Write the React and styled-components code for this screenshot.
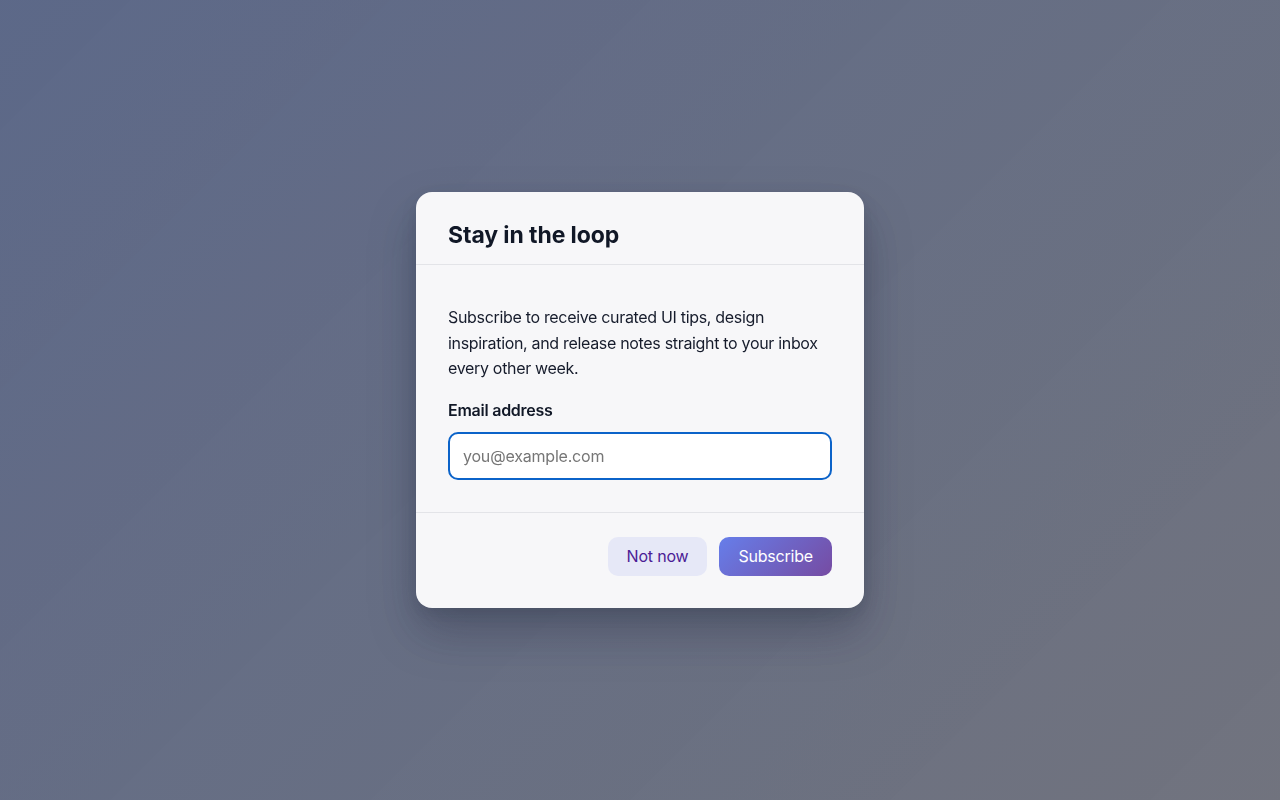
import React from 'react';
import styled, { createGlobalStyle } from 'styled-components';

const GlobalStyle = createGlobalStyle`
  * {
    box-sizing: border-box;
  }

  html, body {
    margin: 0;
    padding: 0;
    height: 100%;
  }

  body {
    font-family: Inter, "Noto Sans", "Liberation Sans", sans-serif;
    color: #0f172a;
    -webkit-font-smoothing: antialiased;
  }
`;

const Page = styled.main`
  width: 100vw;
  height: 100vh;
  display: flex;
  align-items: center;
  justify-content: center;
  background: linear-gradient(135deg, #e6ebfa 0%, #f1f2f6 100%);
`;

const TriggerButton = styled.button`
  height: 35px;
  padding: 0 28px;
  border: none;
  border-radius: 18px;
  background: #ffffff;
  color: #475569;
  font-family: inherit;
  font-size: 14px;
  font-weight: 500;
`;

const Overlay = styled.div`
  position: fixed;
  inset: 0;
  display: flex;
  align-items: center;
  justify-content: center;
  background: linear-gradient(135deg, rgba(58, 72, 108, 0.8) 0%, rgba(74, 77, 90, 0.77) 100%);
`;

const Modal = styled.section`
  width: 448px;
  border-radius: 16px;
  background: #f7f7f9;
  box-shadow: 0 24px 48px rgba(15, 23, 42, 0.28), 0 6px 16px rgba(15, 23, 42, 0.12);
  overflow: hidden;
`;

const ModalHeader = styled.header`
  padding: 31px 32px 17px;
  border-bottom: 1px solid #e3e4e8;
`;

const Title = styled.h2`
  margin: 0;
  font-size: 23px;
  line-height: 24px;
  font-weight: 700;
  color: #111827;
  letter-spacing: -0.1px;
`;

const ModalBody = styled.div`
  padding: 40px 32px 32px;
`;

const Description = styled.p`
  margin: 0 0 16px;
  font-size: 16px;
  line-height: 25.6px;
  letter-spacing: -0.32px;
  color: #161c2c;
`;

const Label = styled.label`
  display: block;
  margin-bottom: 9px;
  font-size: 16px;
  line-height: 25px;
  font-weight: 600;
  letter-spacing: -0.25px;
  color: #111827;
`;

const EmailInput = styled.input`
  width: 100%;
  height: 48px;
  padding: 0 13px;
  border: 2px solid #0b63c9;
  border-radius: 10px;
  background: #ffffff;
  font-family: inherit;
  font-size: 16px;
  letter-spacing: -0.2px;
  color: #111827;
  outline: none;

  &::placeholder {
    color: #767676;
  }
`;

const ModalFooter = styled.footer`
  display: flex;
  justify-content: flex-end;
  gap: 12px;
  padding: 24px 32px 32px;
  border-top: 1px solid #e3e4e8;
`;

const Button = styled.button`
  height: 39px;
  padding: 0 19px;
  border: none;
  border-radius: 10px;
  font-family: inherit;
  font-size: 16px;
  font-weight: 400;
  letter-spacing: -0.2px;
  cursor: pointer;
  color: ${({ $primary }) => ($primary ? '#ffffff' : '#4c1d95')};
  background: ${({ $primary }) =>
    $primary ? 'linear-gradient(135deg, #667eea 0%, #764ba2 100%)' : '#e6e8f7'};
`;

const App = () => {
  return (
    <>
      <GlobalStyle />
      <Page>
        <TriggerButton>Open newsletter signup</TriggerButton>
      </Page>
      <Overlay>
        <Modal role="dialog" aria-labelledby="newsletter-title">
          <ModalHeader>
            <Title id="newsletter-title">Stay in the loop</Title>
          </ModalHeader>
          <ModalBody>
            <Description>
              Subscribe to receive curated UI tips, design inspiration, and release notes straight to your inbox
              every other week.
            </Description>
            <Label htmlFor="email">Email address</Label>
            <EmailInput id="email" type="email" placeholder="you@example.com" />
          </ModalBody>
          <ModalFooter>
            <Button>Not now</Button>
            <Button $primary>Subscribe</Button>
          </ModalFooter>
        </Modal>
      </Overlay>
    </>
  );
};

export default App;
